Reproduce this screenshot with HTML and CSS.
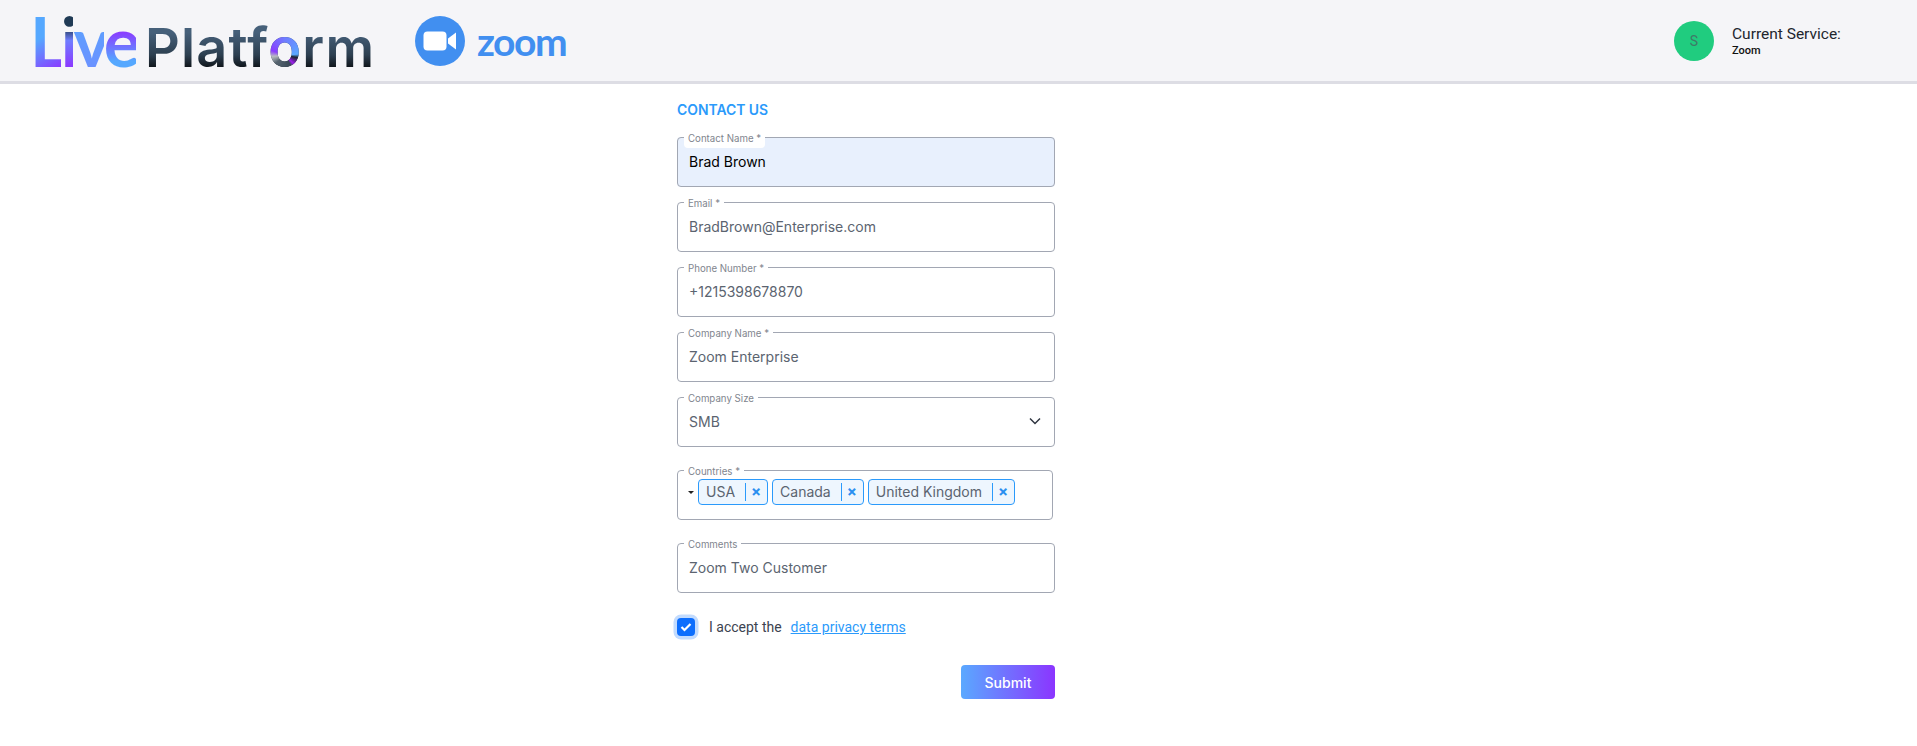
FILE: index.html
```html
<!DOCTYPE html>
<html lang="en">
<head>
<meta charset="utf-8">
<title>Contact Us</title>
<link rel="stylesheet" href="styles.css">
</head>
<body>
<header class="topbar">
  <div class="brand">
    <div class="wordmark"><span class="live"><span class="live-l">L</span><span class="live-i">i</span><span class="live-v">v</span><span class="live-e">e</span></span><span class="platform">Platf<span class="ring">o</span>rm</span></div>
    <div class="zoom-logo">
      <svg class="zoom-icon" width="50" height="50" viewBox="0 0 50 50" aria-hidden="true">
        <circle cx="25" cy="25" r="25" fill="#418ff0"/>
        <rect x="8.500" y="15.500" width="23" height="19" rx="4" fill="#fff"/>
        <path d="M33 22.500 41 16.500V33.500L33 27.500Z" fill="#fff"/>
      </svg>
      <span class="zoom-text">zoom</span>
    </div>
  </div>
  <div class="service">
    <div class="avatar">S</div>
    <div class="service-text">
      <div class="service-title">Current Service:</div>
      <div class="service-name">Zoom</div>
    </div>
  </div>
</header>
<main class="page">
  <form class="contact-form">
    <h1 class="form-title">CONTACT US</h1>
    <fieldset class="field autofilled">
      <legend>Contact Name *</legend>
      <input class="control" type="text" value="Brad Brown">
    </fieldset>
    <fieldset class="field">
      <legend>Email *</legend>
      <input class="control" type="text" value="BradBrown@Enterprise.com">
    </fieldset>
    <fieldset class="field">
      <legend>Phone Number *</legend>
      <input class="control" type="text" value="+1215398678870">
    </fieldset>
    <fieldset class="field">
      <legend>Company Name *</legend>
      <input class="control" type="text" value="Zoom Enterprise">
    </fieldset>
    <fieldset class="field">
      <legend>Company Size</legend>
      <div class="select-row">
        <span>SMB</span>
        <svg width="12" height="8" viewBox="0 0 12 8" aria-hidden="true"><path d="M1 1.500 6 6.500 11 1.500" fill="none" stroke="#2f3540" stroke-width="1.500"/></svg>
      </div>
    </fieldset>
    <fieldset class="field spaced narrow">
      <legend>Countries *</legend>
      <div class="tags-row">
        <svg class="caret" width="6" height="3" viewBox="0 0 6 3" aria-hidden="true"><path d="M0 0H6L3 3Z" fill="#222"/></svg>
        <span class="tag"><span class="tag-label">USA</span><span class="tag-x">×</span></span>
        <span class="tag"><span class="tag-label">Canada</span><span class="tag-x">×</span></span>
        <span class="tag"><span class="tag-label">United Kingdom</span><span class="tag-x">×</span></span>
      </div>
    </fieldset>
    <fieldset class="field spaced">
      <legend>Comments</legend>
      <input class="control" type="text" value="Zoom Two Customer">
    </fieldset>
    <div class="terms">
      <span class="check">
        <svg width="12" height="10" viewBox="0 0 12 10" aria-hidden="true"><path d="M1.500 5 4.500 8 10.500 2" fill="none" stroke="#fff" stroke-width="2.200"/></svg>
      </span>
      <span class="terms-text">I accept the</span>
      <a class="terms-link" href="#">data privacy terms</a>
    </div>
    <div class="actions"><button class="submit" type="button">Submit</button></div>
  </form>
</main>
</body>
</html>
```
FILE: styles.css
```css
* { box-sizing: border-box; }
html, body { margin: 0; height: 100%; overflow: hidden; }
body { background: #fff; font-family: Inter, "Liberation Sans", sans-serif; color: #5b6470; }

.topbar {
  height: 84px;
  background: #f5f5f8;
  border-bottom: 3px solid #dddde4;
  display: flex;
  align-items: center;
  justify-content: space-between;
}
.brand { display: flex; align-items: center; padding-left: 30px; }
.wordmark { display: flex; align-items: baseline; width: 385px; height: 70px; line-height: 70px; }
.live {
  font-family: Lato, sans-serif;
  font-size: 69px;
  font-weight: 700;
  letter-spacing: -5px;
  width: 115px;
  flex: none;
}
.live-l, .live-i, .live-v, .live-e {
  -webkit-background-clip: text;
  background-clip: text;
  color: transparent;
}
.live-l { background-image: linear-gradient(150deg, #55a8ff 45%, #8a3cff 85%); }
.live-i { background-image: linear-gradient(180deg, #1f3a55 35%, #6f7dff 50%, #8a3cff 80%); }
.live-v { background-image: linear-gradient(180deg, #55a8ff, #6f8dff); }
.live-e { background-image: linear-gradient(180deg, #8a3cff 40%, #55a8ff 75%); }
.platform {
  font-family: Inter, sans-serif;
  font-size: 54px;
  font-weight: 600;
  letter-spacing: 1.200px;
  background: linear-gradient(180deg, #46607a 28%, #2d3f50 60%, #050608 84%);
  -webkit-background-clip: text;
  background-clip: text;
  color: transparent;
}
.ring {
  background: conic-gradient(at 50% 62%, #6f7dff 0deg, #5aa9ff 85deg, #1a2530 100deg, #a020f0 135deg, #3a4a58 150deg, #55636f 230deg, #b8bcc0 265deg, #8a3cff 290deg, #6f7dff 360deg);
  -webkit-background-clip: text;
  background-clip: text;
  color: transparent;
}
.zoom-logo { display: flex; align-items: center; gap: 12px; }
.zoom-icon { display: block; }
.zoom-text {
  font-family: Lato, sans-serif;
  font-size: 39px;
  font-weight: 700;
  line-height: 50px;
  letter-spacing: -1.500px;
  color: #418ff0;
}

.service { display: flex; align-items: center; gap: 18px; width: 243px; }
.avatar {
  width: 40px;
  height: 40px;
  border-radius: 50%;
  background: #20cc7f;
  color: #3f7a68;
  font: 400 14px/40px Roboto, sans-serif;
  text-align: center;
}
.service-text { padding-top: 1px; }
.service-title { font: 400 15.500px/18px Roboto, sans-serif; color: #22262e; }
.service-name { font: 500 11px/15px Roboto, sans-serif; color: #111; }

.page { padding-left: 677px; }
.contact-form { width: 378px; display: flex; flex-direction: column; gap: 6px; }
.form-title {
  margin: 17px 0 3px;
  font-size: 13.900px;
  font-weight: 600;
  line-height: 18px;
  color: #2b9afb;
  height: 18px;
}
.field {
  margin: 0;
  padding: 0 10px 10px;
  min-width: 0;
  height: 59px;
  border: 1px solid #a2a7b3;
  border-radius: 4px;
}
.field.spaced { margin-top: 8px; }
.field.narrow { width: 376px; padding-right: 0; }
.field legend {
  position: relative;
  top: 2px;
  margin-left: -4px;
  padding: 0 4px;
  font-size: 9.700px;
  line-height: 18px;
  color: #81858e;
}
.autofilled { background: #e8f0fd; }
.autofilled legend { background: #fff; border-radius: 0 0 4px 4px; }
.control {
  display: block;
  width: 100%;
  height: 30px;
  padding: 0 0 0 1px;
  border: 0;
  outline: 0;
  background: transparent;
  font: 400 14px/28px Inter, sans-serif;
  color: #5b6470;
}
.autofilled .control { color: #000; }
.select-row {
  display: flex;
  align-items: center;
  justify-content: space-between;
  height: 30px;
  padding: 0 3px 0 1px;
  font-size: 14px;
}
.tags-row { display: flex; align-items: center; gap: 4px; height: 26px; }
.caret { margin-right: 0; }
.tag {
  display: flex;
  align-items: center;
  height: 26px;
  padding: 0 1px 0 7px;
  border: 1px solid #2b9afb;
  border-radius: 4px;
  background: #eef6fe;
  font-size: 14px;
}
.tag-label { padding-right: 10px; border-right: 1px solid #2b9afb; line-height: 18px; }
.tag-x {
  width: 20px;
  text-align: center;
  font-size: 15px;
  font-weight: 700;
  line-height: 18px;
  color: #2b8ff0;
}
.terms { display: flex; align-items: center; height: 18px; margin-top: 19px; }
.check {
  display: flex;
  align-items: center;
  justify-content: center;
  width: 18px;
  height: 18px;
  border-radius: 4px;
  background: #0d6efd;
  box-shadow: 0 0 0 3.500px #c2dbfe;
}
.terms-text { margin-left: 14px; font: 400 14px/18px Roboto, sans-serif; color: #3c4350; }
.terms-link { margin-left: 9px; font: 400 14px/18px Roboto, sans-serif; color: #2b9afb; text-decoration: underline; }
.actions { display: flex; justify-content: flex-end; margin-top: 23px; }
.submit {
  width: 94px;
  height: 34px;
  border: 0;
  border-radius: 4px;
  background: linear-gradient(90deg, #5aa9ff, #8b35ff);
  color: #fff;
  font: 500 14px/34px Inter, sans-serif;
}
```
